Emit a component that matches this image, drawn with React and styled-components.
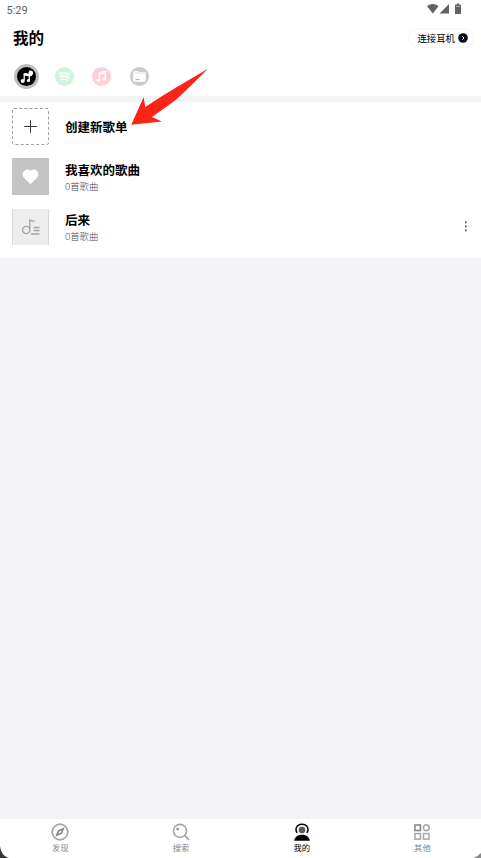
import styled, { createGlobalStyle } from "styled-components"

const GlobalStyle = createGlobalStyle`
  * { box-sizing: border-box; }
  body {
    margin: 0;
    background: #f4f4f7;
    font-family: Roboto, "Noto Sans CJK SC", sans-serif;
    color: #000;
  }
`;

const playlists = [
  { id: 1, name: "我喜欢的歌曲", count: "0首歌曲", cover: "liked" },
  { id: 2, name: "后来", count: "0首歌曲", cover: "list", menu: true },
];

const tabs = [
  { label: "发现", icon: <DiscoverIcon /> },
  { label: "搜索", icon: <SearchIcon /> },
  { label: "我的", icon: <MineIcon />, active: true },
  { label: "其他", icon: <OtherIcon /> },
];

const App = () => {
  return <Screen>
    <GlobalStyle />
    <StatusBar>
      <span>5:29</span>
      <StatusIcons />
    </StatusBar>
    <Header>
      <Title>我的</Title>
      <Connect>
        连接耳机
        <svg width="10" height="10" viewBox="0 0 10 10">
          <circle cx="5" cy="5" r="4.8" fill="#050b14" />
          <path d="M4.2 3.2 6 5 4.2 6.8" fill="none" stroke="#dfe8ee" strokeWidth="1" />
        </svg>
      </Connect>
    </Header>
    <Sources>
      <Source $color="#000" $active><LocalIcon /></Source>
      <Source $color="#d0f4de"><SpotifyIcon /></Source>
      <Source $color="#ffcfd7"><NoteIcon /></Source>
      <Source $color="#cbcbcb"><FolderIcon /></Source>
    </Sources>
    <List>
      <Row>
        <Cover $type="new">
          <svg width="37" height="37" viewBox="0 0 37 37" fill="none">
            <rect x=".5" y=".5" width="36" height="36" rx="1.5" stroke="#969696" strokeWidth=".9" strokeDasharray="3 2.2" />
            <path d="M12.200 18.500h12.600M18.500 12.200v12.600" stroke="#333" strokeWidth="1" />
          </svg>
        </Cover>
        <Info>
          <Name>创建新歌单</Name>
        </Info>
      </Row>
      {playlists.map((item) => (
        <Row key={item.id}>
          <Cover $type={item.cover}>
            {item.cover === "liked" ? <HeartIcon /> : <PlaylistIcon />}
          </Cover>
          <Info>
            <Name>{item.name}</Name>
            <Count>{item.count}</Count>
          </Info>
          {item.menu && <MenuIcon />}
        </Row>
      ))}
    </List>
    <TabBar>
      {tabs.map((tab) => (
        <Tab key={tab.label} $active={tab.active}>
          {tab.icon}
          <span>{tab.label}</span>
        </Tab>
      ))}
    </TabBar>
    <Arrow width="84" height="62" viewBox="0 0 84 62">
      <path d="M79.900 4.700C60 16.500 38 29 17.300 43L15.600 33.300 3.300 60.800 33.900 57.500 24 53C35 45 45 38.500 52 32 62 22.500 71 13.500 79.900 4.700Z" fill="#fb2416" />
    </Arrow>
    <Corner $side="left" width="9" height="12" viewBox="0 0 9 12">
      <path d="M0 0C.6 5 3 10 8.500 12H0Z" fill="#38383b" />
    </Corner>
    <Corner $side="right" width="8" height="5" viewBox="0 0 8 5">
      <path d="M8 0C6 2 3 4 0 5H8Z" fill="#89898b" />
    </Corner>
  </Screen>
};

export default App;

function StatusIcons() {
  return <svg width="36" height="12" viewBox="0 0 36 12" fill="#626262">
    <path d="M0 3.200C3.500.2 8 .2 11.500 3.200L5.800 10.400Z" />
    <path d="M22 1v9.500h-9.500Z" />
    <path d="M28 1.700h1.700V.5h2.600v1.200H34V11h-6Z" />
    <path d="M29 3h4v1h-4Z" fill="#a9a9a9" />
  </svg>
}

function LocalIcon() {
  return <svg width="19" height="19" viewBox="0 0 19 19" fill="none" stroke="#fff">
    <path d="M7.200 13.500V7.300h3.300M12.300 8v5.500" strokeWidth="1.300" />
    <path d="M6.600 6.300 9.500 6 11.100 7 12.200 3.800C14.800 3 16.300 4.500 16.100 6.400 15.700 8.800 13.400 9.700 11 9.300L7.200 8.600Z" fill="#fff" stroke="none" />
    <circle cx="5.700" cy="14" r="2" fill="#fff" stroke="none" />
    <circle cx="11.400" cy="13.500" r="1.600" fill="#fff" stroke="none" />
  </svg>
}

function SpotifyIcon() {
  return <svg width="19" height="19" viewBox="0 0 19 19" fill="none" stroke="#fff" strokeLinecap="round">
    <path d="M5 6.500c3-.9 6.500-.6 9.300.9" strokeWidth="2" />
    <path d="M5.500 9.600c2.600-.7 5.400-.4 7.800.9" strokeWidth="1.800" />
    <path d="M5.900 12.400c2.300-.6 4.400-.3 6.400.8" strokeWidth="1.500" />
  </svg>
}

function NoteIcon() {
  return <svg width="19" height="19" viewBox="0 0 19 19" fill="none" stroke="#fff">
    <path d="M7.400 13.200V6l6-1.400v7.200" strokeWidth="1.300" />
    <path d="M6.800 5.300l7.300-1.600v2.800L6.800 8.100Z" fill="#fff" stroke="none" />
    <ellipse cx="6.300" cy="13.300" rx="1.900" ry="1.600" fill="#fff" stroke="none" />
    <ellipse cx="12.300" cy="12" rx="1.900" ry="1.600" fill="#fff" stroke="none" />
  </svg>
}

function FolderIcon() {
  return <svg width="19" height="19" viewBox="0 0 19 19">
    <path d="M3.800 4.600h4.500l1 1h5.900v8.600H3.800Z" fill="#fff" stroke="#fff" strokeWidth="1" strokeLinejoin="round" />
    <path d="M4.300 6h10.400" stroke="#d2d2d2" strokeWidth=".6" />
    <path d="M5.500 12.600h4" stroke="#aaa" strokeWidth="1" />
  </svg>
}

function HeartIcon() {
  return <svg width="17" height="16" viewBox="0 0 17 16">
    <path d="M8.500 15.300 1.500 8.200C-1.700 3.800 4.500-2.300 8.500 2.100 12.500-2.300 18.700 3.800 15.500 8.200Z" fill="#fff" />
  </svg>
}

function PlaylistIcon() {
  return <svg width="18" height="16" viewBox="0 0 18 16" fill="none" stroke="#a3a3a3" strokeWidth="1.300">
    <circle cx="4.200" cy="11" r="3.600" />
    <path d="M7.800 11V1c1.200 1 2.800 1.300 4.800 1.300M11.500 8.500H17.500M11.500 11.500H17.500M9 15H17.500" />
  </svg>
}

function MenuIcon() {
  return <MenuSvg width="4" height="11" viewBox="0 0 4 11" fill="#3c3c3c">
    <rect x="1" y=".5" width="1.500" height="1.800" />
    <rect x="1" y="4.500" width="1.500" height="1.800" />
    <rect x="1" y="8.500" width="1.500" height="1.800" />
  </MenuSvg>
}

function DiscoverIcon() {
  return <svg width="18" height="18" viewBox="0 0 18 18" fill="none" stroke="#a4a4a4">
    <circle cx="9" cy="9" r="7.800" strokeWidth="1.700" />
    <path d="M12.200 5.800 10.400 10.200 5.800 12.200 7.600 7.800Z" strokeWidth="1.700" stroke="#858585" />
  </svg>
}

function SearchIcon() {
  return <svg width="18" height="18" viewBox="0 0 18 18" fill="none" stroke="#a4a4a4" strokeWidth="1.600">
    <circle cx="8" cy="7.900" r="6.500" />
    <path d="M12.500 12.400 17 16.700" strokeWidth="1.800" />
    <circle cx="5.600" cy="6.100" r="1.300" fill="#888" stroke="none" />
  </svg>
}

function MineIcon() {
  return <svg width="18" height="18" viewBox="0 0 18 18">
    <path d="M4.200 9.900C1.700 6.800 3 1.300 9 1.300s7.300 5.500 4.800 8.600" fill="none" stroke="#000" strokeWidth="1.400" />
    <circle cx="9" cy="7" r="3.300" fill="#5b5b5b" />
    <path d="M1.200 17.700C1.500 13.800 5 11.700 9 11.700s7.500 2.100 7.800 6Z" fill="#000" />
  </svg>
}

function OtherIcon() {
  return <svg width="18" height="18" viewBox="0 0 18 18" fill="none" stroke="#aaa" strokeWidth="1.600">
    <rect x="1.900" y="2" width="5.500" height="5.500" stroke="#898989" />
    <circle cx="13.300" cy="4.800" r="2.900" />
    <rect x="1.900" y="10.600" width="5.500" height="5.500" />
    <rect x="10.500" y="10.600" width="5.500" height="5.500" />
  </svg>
}

const Screen = styled.div`
  position: relative;
  height: 100vh;
  display: flex;
  flex-direction: column;
  overflow: hidden;
`;

const StatusBar = styled.div`
  height: 20px;
  padding: 0 18px 0 6.500px;
  display: flex;
  align-items: center;
  justify-content: space-between;
  background: #fff;
  color: #646464;
  font-size: 11px;

  svg { margin-top: -3px; }
`;

const Header = styled.header`
  height: 37px;
  padding: 0 7px 0 13px;
  display: flex;
  align-items: center;
  justify-content: space-between;
  background: #fff;
`;

const Title = styled.h1`
  margin: 1px 0 0;
  font-size: 15.500px;
  line-height: 20px;
  font-weight: 700;
`;

const Connect = styled.button`
  height: 20px;
  margin-top: -1px;
  padding: 0 5px 0 8px;
  display: flex;
  align-items: center;
  gap: 3px;
  border: 1px solid #f5f5f5;
  border-radius: 10px;
  background: #fff;
  color: #000;
  font-family: inherit;
  font-size: 9.400px;
`;

const Sources = styled.div`
  height: 39px;
  padding-left: 14px;
  display: flex;
  align-items: center;
  gap: 12.600px;
  background: #fff;
`;

const Source = styled.div`
  width: 25px;
  height: 25px;
  padding: 3px;
  border-radius: 50%;
  background: ${(props) => (props.$active ? "#bfbfbf" : "transparent")};

  svg {
    display: block;
    border-radius: 50%;
    background: ${(props) => props.$color};
  }
`;

const List = styled.main`
  margin-top: 5.700px;
  padding-bottom: 6.300px;
  background: #fff;
`;

const Row = styled.div`
  height: 50px;
  padding: 0 12px;
  display: flex;
  align-items: center;
  gap: 16px;
`;

const Cover = styled.div`
  width: 37px;
  height: ${({ $type }) => ($type === "list" ? 36 : 37)}px;
  display: flex;
  align-items: center;
  justify-content: center;
  border-radius: 1px;
  background: ${({ $type }) => ({ liked: "#c4c4c4", list: "#ededed", new: "#fff" })[$type]};
  ${({ $type }) => $type === "list" && "box-shadow: inset 1px 0 #d6d6d6, inset -1px 0 #d6d6d6;"}
`;

const Info = styled.div`
  padding-top: 2px;
  display: flex;
  flex-direction: column;
`;

const Name = styled.div`
  padding-top: 1px;
  font-size: 12.500px;
  line-height: 18px;
  font-weight: 700;
`;

const Count = styled.div`
  color: #4a4a4a;
  font-size: 9.400px;
  line-height: 14px;
  font-weight: 300;
`;

const MenuSvg = styled.svg`
  margin: 0 1px 0 auto;
`;

const TabBar = styled.nav`
  height: 39px;
  margin-top: auto;
  display: grid;
  grid-template-columns: repeat(4, 120.700px);
  background: #fff;
`;

const Tab = styled.div`
  padding-top: 4px;
  display: flex;
  flex-direction: column;
  align-items: center;
  color: ${(props) => (props.$active ? "#000" : "#858585")};
  font-size: 8.300px;
  line-height: 14px;
`;

// pointer laid over the list
const Arrow = styled.svg`
  position: absolute;
  left: 128px;
  top: 64px;
`;

const Corner = styled.svg`
  position: absolute;
  bottom: 0;
  ${(props) => props.$side}: 0;
`;
